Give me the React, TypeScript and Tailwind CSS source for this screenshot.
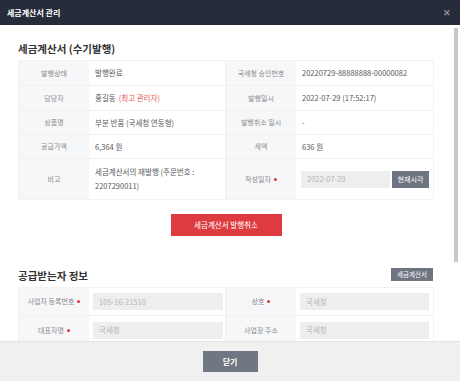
const font = { fontFamily: '"Noto Sans CJK KR", "Noto Sans", sans-serif' };

function Dot() {
  return <span className="ml-[3px] inline-block h-[3px] w-[3px] rounded-full bg-[#e0343a] align-middle" />;
}

function Label({ children, req }: { children: React.ReactNode; req?: boolean }) {
  return (
    <div className="flex w-[70px] shrink-0 items-center justify-center bg-[#f6f7f9] text-[7px] text-[#8a8a8a]">
      {children}
      {req && <Dot />}
    </div>
  );
}

function Value({ children }: { children: React.ReactNode }) {
  return <div className="flex flex-1 items-center px-[6px] text-[7.5px] text-[#595959]">{children}</div>;
}

function Input({ value, w }: { value: string; w: string }) {
  return (
    <div className={`flex h-[17px] ${w} items-center bg-[#eeeeee] px-[6px] text-[7.5px] text-[#b5b5b5]`}>{value}</div>
  );
}

function Row({ h, children, last }: { h: string; children: React.ReactNode; last?: boolean }) {
  return <div className={`flex ${h} ${last ? "" : "border-b border-[#eef0f2]"}`}>{children}</div>;
}

export default function App() {
  return (
    <div className="flex h-[381px] w-[460px] flex-col overflow-hidden bg-white" style={font}>
      <div className="flex h-[25px] shrink-0 items-center justify-between bg-[#262c3a] pl-[7px] pr-[9px]">
        <span className="text-[8px] font-bold text-white">세금계산서 관리</span>
        <span className="text-[9px] font-bold leading-none text-[#8b909a]">✕</span>
      </div>

      <div className="flex min-h-0 flex-1">
        <div className="min-w-0 flex-1 overflow-hidden pl-[18px] pr-[18px]">
          <h2 className="mt-[17px] h-[13px] text-[10.5px] font-bold leading-[13px] text-[#333]">
            세금계산서 (수기발행)
          </h2>
          <div className="mt-[5px] w-[416px] border border-[#f1f2f4]">
            <Row h="h-[25px]">
              <div className="flex w-1/2 border-r border-[#eef0f2]">
                <Label>발행상태</Label>
                <Value>발행완료</Value>
              </div>
              <div className="flex w-1/2">
                <Label>국세청 승인번호</Label>
                <Value>20220729-88888888-00000082</Value>
              </div>
            </Row>
            <Row h="h-[25px]">
              <div className="flex w-1/2 border-r border-[#eef0f2]">
                <Label>담당자</Label>
                <Value>
                  홍길동 <span className="ml-[3px] text-[#e8585c]">(최고 관리자)</span>
                </Value>
              </div>
              <div className="flex w-1/2">
                <Label>발행일시</Label>
                <Value>2022-07-29 (17:52:17)</Value>
              </div>
            </Row>
            <Row h="h-[24px]">
              <div className="flex w-1/2 border-r border-[#eef0f2]">
                <Label>상품명</Label>
                <Value>부분 반품 (국세청 연동형)</Value>
              </div>
              <div className="flex w-1/2">
                <Label>발행취소 일시</Label>
                <Value>-</Value>
              </div>
            </Row>
            <Row h="h-[24px]">
              <div className="flex w-1/2 border-r border-[#eef0f2]">
                <Label>공급가액</Label>
                <Value>6,364 원</Value>
              </div>
              <div className="flex w-1/2">
                <Label>세액</Label>
                <Value>636 원</Value>
              </div>
            </Row>
            <Row h="h-[40px]" last>
              <div className="flex w-1/2 border-r border-[#eef0f2]">
                <Label>비고</Label>
                <div className="flex flex-1 items-center px-[6px] text-[7.5px] leading-[14px] text-[#595959]">
                  세금계산서의 재발행 (주문번호 :<br />
                  2207290011)
                </div>
              </div>
              <div className="flex w-1/2">
                <Label req>작성일자</Label>
                <div className="flex flex-1 items-center pl-[5px]">
                  <Input value="2022-07-29" w="w-[89px]" />
                  <button className="ml-[2px] h-[17px] w-[37px] bg-[#6e7480] text-[7px] text-white">현재시각</button>
                </div>
              </div>
            </Row>
          </div>

          <div className="mt-[14px] flex justify-center">
            <button className="h-[22px] w-[111px] bg-[#dd3b40] text-[7.5px] text-white">세금계산서 발행취소</button>
          </div>

          <div className="mt-[32px] flex items-end justify-between">
            <h2 className="text-[10.5px] font-bold leading-[13px] text-[#333]">공급받는자 정보</h2>
            <button className="mb-[1px] mr-[1px] h-[13px] w-[42px] bg-[#6e7480] text-[6.5px] text-white">세금계산서</button>
          </div>
          <div className="mt-[5px] w-[416px] border border-[#f1f2f4]">
            <Row h="h-[28px]">
              <div className="flex w-1/2 border-r border-[#eef0f2]">
                <Label req>사업자 등록번호</Label>
                <div className="flex flex-1 items-center pl-[4px]">
                  <Input value="105-16-21510" w="w-[130px]" />
                </div>
              </div>
              <div className="flex w-1/2">
                <Label req>상호</Label>
                <div className="flex flex-1 items-center pl-[4px]">
                  <Input value="국세청" w="w-[129px]" />
                </div>
              </div>
            </Row>
            <Row h="h-[28px]" last>
              <div className="flex w-1/2 border-r border-[#eef0f2]">
                <Label req>대표자명</Label>
                <div className="flex flex-1 items-center pl-[4px]">
                  <Input value="국세청" w="w-[130px]" />
                </div>
              </div>
              <div className="flex w-1/2">
                <Label>사업장 주소</Label>
                <div className="flex flex-1 items-center pl-[4px]">
                  <Input value="국세청" w="w-[129px]" />
                </div>
              </div>
            </Row>
          </div>
        </div>
        <div className="w-[8px] shrink-0 pt-[3px]">
          <div className="ml-[2px] h-[234px] w-[4px] bg-[#c9c9c9]" />
        </div>
      </div>

      <div className="flex h-[40px] shrink-0 items-center justify-center border-t border-[#e4e4e4] bg-[#f0f0f0]">
        <button className="h-[21px] w-[55px] bg-[#6f7782] text-[8px] font-bold text-white">닫기</button>
      </div>
    </div>
  );
}
